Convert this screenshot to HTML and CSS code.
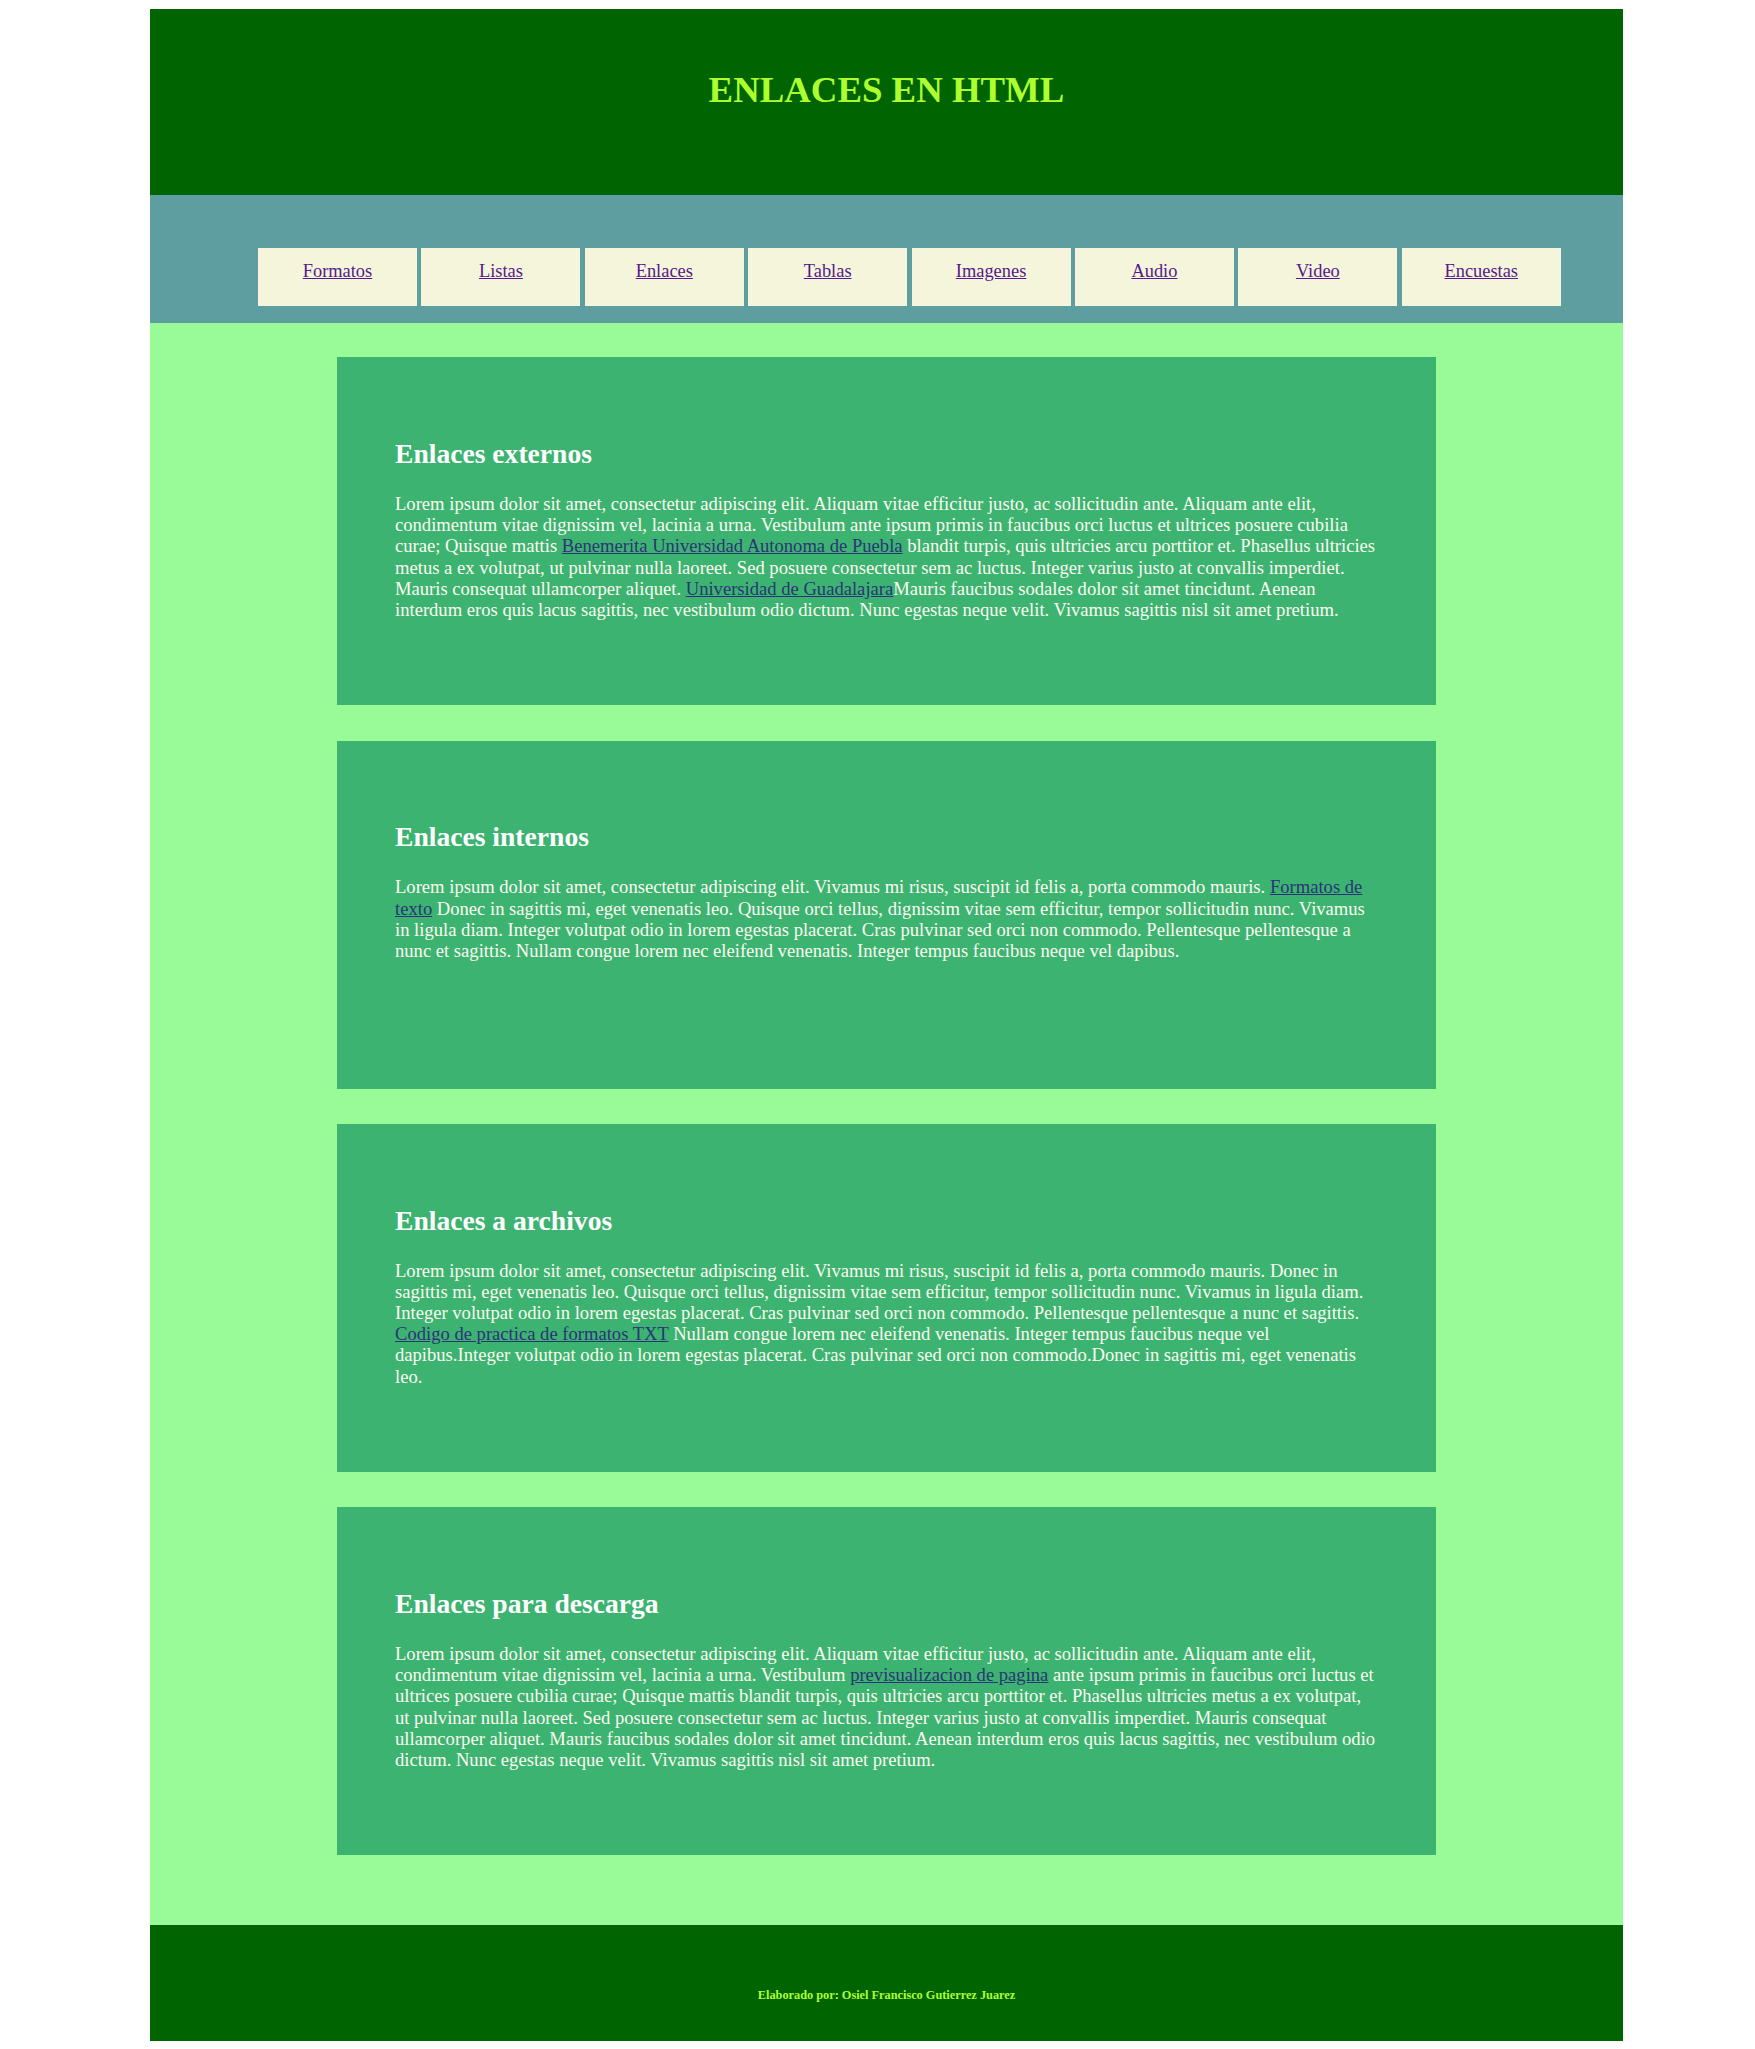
FILE: index.html
```html
<!DOCTYPE html>
<html lang="es">
<head>
<meta charset="utf-8">
<title>Enlaces en HTML</title>
<link rel="stylesheet" href="styles.css">
</head>
<body>
<div class="page">
  <header class="header">
    <h1 class="title">ENLACES EN HTML</h1>
  </header>
  <nav class="nav">
    <ul class="menu">
      <li class="menu-item"><a href="#" class="menu-link">Formatos</a></li>
      <li class="menu-item"><a href="#" class="menu-link">Listas</a></li>
      <li class="menu-item"><a href="#" class="menu-link">Enlaces</a></li>
      <li class="menu-item"><a href="#" class="menu-link">Tablas</a></li>
      <li class="menu-item"><a href="#" class="menu-link">Imagenes</a></li>
      <li class="menu-item"><a href="#" class="menu-link">Audio</a></li>
      <li class="menu-item"><a href="#" class="menu-link">Video</a></li>
      <li class="menu-item"><a href="#" class="menu-link">Encuestas</a></li>
    </ul>
  </nav>
  <main class="main">
    <section class="card">
      <h2 class="card-title">Enlaces externos</h2>
      <p class="card-text">Lorem ipsum dolor sit amet, consectetur adipiscing elit. Aliquam vitae efficitur justo, ac sollicitudin ante. Aliquam ante elit, condimentum vitae dignissim vel, lacinia a urna. Vestibulum ante ipsum primis in faucibus orci luctus et ultrices posuere cubilia curae; Quisque mattis <a href="#" class="text-link">Benemerita Universidad Autonoma de Puebla</a> blandit turpis, quis ultricies arcu porttitor et. Phasellus ultricies metus a ex volutpat, ut pulvinar nulla laoreet. Sed posuere consectetur sem ac luctus. Integer varius justo at convallis imperdiet. Mauris consequat ullamcorper aliquet. <a href="#" class="text-link">Universidad de Guadalajara</a>Mauris faucibus sodales dolor sit amet tincidunt. Aenean interdum eros quis lacus sagittis, nec vestibulum odio dictum. Nunc egestas neque velit. Vivamus sagittis nisl sit amet pretium.</p>
    </section>
    <section class="card">
      <h2 class="card-title">Enlaces internos</h2>
      <p class="card-text">Lorem ipsum dolor sit amet, consectetur adipiscing elit. Vivamus mi risus, suscipit id felis a, porta commodo mauris. <a href="#" class="text-link">Formatos de texto</a> Donec in sagittis mi, eget venenatis leo. Quisque orci tellus, dignissim vitae sem efficitur, tempor sollicitudin nunc. Vivamus in ligula diam. Integer volutpat odio in lorem egestas placerat. Cras pulvinar sed orci non commodo. Pellentesque pellentesque a nunc et sagittis. Nullam congue lorem nec eleifend venenatis. Integer tempus faucibus neque vel dapibus.</p>
    </section>
    <section class="card">
      <h2 class="card-title">Enlaces a archivos</h2>
      <p class="card-text">Lorem ipsum dolor sit amet, consectetur adipiscing elit. Vivamus mi risus, suscipit id felis a, porta commodo mauris. Donec in sagittis mi, eget venenatis leo. Quisque orci tellus, dignissim vitae sem efficitur, tempor sollicitudin nunc. Vivamus in ligula diam. Integer volutpat odio in lorem egestas placerat. Cras pulvinar sed orci non commodo. Pellentesque pellentesque a nunc et sagittis. <a href="#" class="text-link">Codigo de practica de formatos TXT</a> Nullam congue lorem nec eleifend venenatis. Integer tempus faucibus neque vel dapibus.Integer volutpat odio in lorem egestas placerat. Cras pulvinar sed orci non commodo.Donec in sagittis mi, eget venenatis leo.</p>
    </section>
    <section class="card">
      <h2 class="card-title">Enlaces para descarga</h2>
      <p class="card-text">Lorem ipsum dolor sit amet, consectetur adipiscing elit. Aliquam vitae efficitur justo, ac sollicitudin ante. Aliquam ante elit, condimentum vitae dignissim vel, lacinia a urna. Vestibulum <a href="#" class="text-link">previsualizacion de pagina</a> ante ipsum primis in faucibus orci luctus et ultrices posuere cubilia curae; Quisque mattis blandit turpis, quis ultricies arcu porttitor et. Phasellus ultricies metus a ex volutpat, ut pulvinar nulla laoreet. Sed posuere consectetur sem ac luctus. Integer varius justo at convallis imperdiet. Mauris consequat ullamcorper aliquet. Mauris faucibus sodales dolor sit amet tincidunt. Aenean interdum eros quis lacus sagittis, nec vestibulum odio dictum. Nunc egestas neque velit. Vivamus sagittis nisl sit amet pretium.</p>
    </section>
  </main>
  <footer class="footer">
    <h6 class="credit">Elaborado por: Osiel Francisco Gutierrez Juarez</h6>
  </footer>
</div>
</body>
</html>
```

FILE: styles.css
```css
html {
  background: #ffffff;
}

body {
  margin: 8px;
  font-family: "Liberation Serif", "Times New Roman", serif;
  font-size: 18.4px;
}

.page {
  width: 1473px;
  margin: 1px 0 0 142px;
}

.header {
  box-sizing: border-box;
  height: 186px;
  padding-top: 34.5px;
  background: #006400;
  text-align: center;
}

.title {
  margin: 24.7px 0;
  font-size: 36.8px;
  font-weight: bold;
  color: #adff2f;
}

.nav {
  box-sizing: border-box;
  height: 128px;
  padding: 53px 0 0 108px;
  background: #5f9ea0;
}

.menu {
  display: flex;
  gap: 4.4px;
  margin: 0;
  padding: 0;
  list-style: none;
}

.menu-item {
  box-sizing: border-box;
  width: 159px;
  height: 58px;
  padding-top: 12.6px;
  background: #f5f5dc;
  text-align: center;
}

.menu-link {
  color: #551a8b;
  text-decoration: underline;
}

.main {
  display: flex;
  flex-direction: column;
  align-items: center;
  gap: 35.3px;
  padding: 34.3px 0 70px;
  background: #98fb98;
}

.card {
  box-sizing: border-box;
  width: 1099px;
  height: 348px;
  padding: 58px;
  background: #3cb371;
  overflow: hidden;
}

.card-title {
  margin: 22.9px 0;
  font-size: 27.6px;
  font-weight: bold;
  color: #ffffff;
}

.card-text {
  margin: 18.4px 0;
  font-size: 18.6px;
  line-height: 21.2px;
  color: #fbfbef;
}

.text-link {
  color: #2c3478;
}

.footer {
  box-sizing: border-box;
  height: 116px;
  padding-top: 63px;
  background: #006400;
  text-align: center;
}

.credit {
  margin: 0;
  font-size: 12.3px;
  font-weight: bold;
  color: #adff2f;
}
```
